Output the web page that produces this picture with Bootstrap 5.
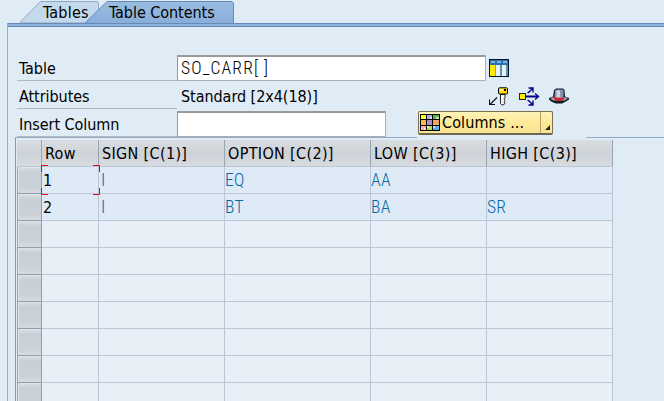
<!DOCTYPE html>
<html lang="en">
<head>
<meta charset="utf-8">
<title>Table Contents</title>
<link href="https://cdn.jsdelivr.net/npm/bootstrap@5.3.0/dist/css/bootstrap.min.css" rel="stylesheet">
<style>
body{width:664px;height:401px;background:#dfebf5;color:#000;font:16px/20px "DejaVu Sans Condensed","DejaVu Sans",sans-serif;font-stretch:condensed;letter-spacing:-.05px}
.tabstrip{height:23px}
.tab-item{height:23px}
.tab-a{width:65px;margin-left:20px;padding:3px 0 0 23px;letter-spacing:.2px}
.tab-b{width:149px;padding:3px 0 0 24px}
.tab-shape{position:absolute;left:0;top:0}
.tab-item span{position:relative}
.panel{margin-left:7px;height:378px;border-left:1px solid #97aeca}
.strip{height:4px;background:#8db2dc;border-top:1px solid #668bb6;border-bottom:1px solid #668bb6}
.form-area{padding:28px 0 0 9px}
.line{height:28px}
.line.first,.line.last{height:26px}
.line.mid{height:30px}
.lbl{width:160px;padding:4px 0 0 2px;border-bottom:1px solid #b3b6ba}
.first .lbl,.last .lbl{height:26px}
.mid .lbl{height:28px;padding-top:6px}
.field{height:26px;border:1px solid #aaadb2;border-top:2px solid #999;border-left-color:#999;background:#fff;border-radius:1px}
.w-table{width:309px;padding:1px 0 0 3px}
.w-insert{width:209px}
.attr{width:312px;padding:6px 0 0 4px;letter-spacing:-.05px}
.mono{font-family:Roboto,"Liberation Sans",sans-serif;font-weight:300;font-size:17.5px;letter-spacing:.3px}
.w-table.mono{letter-spacing:1.15px}
.colbtn{width:135px;height:24px;margin-left:32px;border:1px solid #7b6f50;border-bottom:2px solid #6f6650;border-radius:2px;background:linear-gradient(#fff3b8,#fde894 55%,#f9e395)}
.colbtn .main{width:122px;padding-left:1px;border-right:1px solid #b3a36a}
.colbtn span{padding:1px 0 0 2px;letter-spacing:.12px}
.gridbox{margin-left:7px;width:649px;height:264px;border-left:1px solid #7f9cc4;padding:2px 0 0 1px}
.topline{height:1px;background:#93acca}
.sheet{display:grid;grid-template-columns:25px 57px 126px 146px 116px 126px;grid-template-rows:27px;grid-auto-rows:27px;width:596px;height:262px}
.sheet>div{border-right:1px solid #bdc6d6;border-bottom:1px solid #bdc6d6;background:#e8eff6;white-space:nowrap;overflow:hidden}
.sheet>.hd{background:linear-gradient(#d9dddf,#ced3d9 55%,#d8dcdf);border-right-color:#9aa5b3;padding:4px 0 0 3px;letter-spacing:.34px}
.sheet>.sel{background:linear-gradient(#dcdfe4,#c9cfd7 20%,#ccd2d8 80%,#d8dce0);border-color:#909eb0;box-shadow:inset 1px 0 #9ba7b6,inset 2px 1px #dfe2e7}
.sheet>.f{background:#deeaf5;padding:4px 0 0 1px}
.sheet>.m{color:#0467a5;padding:3px 0 0}
.sheet>.bar{padding-left:2px}
.focus-box{left:41px;top:165px}
</style>
<script src="https://cdn.jsdelivr.net/npm/bootstrap@5.3.0/dist/js/bootstrap.bundle.min.js"></script>
</head>
<body class="overflow-hidden position-relative">
<nav class="tabstrip d-flex">
 <div class="tab-item tab-a position-relative flex-shrink-0">
  <svg class="tab-shape" width="79" height="23"><path d="M0 22.5L20.5 1.5H77.5L78.5 3V23H0Z" fill="#c4d9ec" stroke="#91a9c4"/></svg>
  <span>Tables</span>
 </div>
 <div class="tab-item tab-b position-relative flex-shrink-0">
  <svg class="tab-shape" width="149" height="23"><defs><linearGradient id="tg" x2="0" y2="1"><stop stop-color="#99bce1"/><stop offset="1" stop-color="#88add9"/></linearGradient></defs><path d="M0 23L22 1.5H147L148.500 3V24" fill="url(#tg)" stroke="#668bb6"/></svg>
  <span>Table Contents</span>
 </div>
</nav>
<main class="panel">
 <div class="strip"></div>
 <div class="form-area">
  <div class="line first d-flex">
   <div class="lbl">Table</div>
   <div class="field mono w-table">SO_CARR[ ]</div>
   <svg style="margin:4px 0 0 3px" width="20" height="18" shape-rendering="crispEdges"><path fill="#001530" d="M0 0h20v18H0z"/><path fill="#2c6faa" d="M1 1h18v5H1z"/><path fill="#78b7df" d="M2 2h4v2H2zM8 2h4v2H8zM14 2h4v2h-4z"/><path fill="#ffe900" d="M1 6h5v11H1z"/><path fill="#c9a500" d="M6 6h1v11H6z"/><path fill="#e3f3fb" d="M7 6h4v11H7zM13 6h4v11h-4z"/><path fill="#6b8b9f" d="M11 6h2v11h-2zM17 6h2v11h-2z"/></svg>
  </div>
  <div class="line mid d-flex">
   <div class="lbl">Attributes</div>
   <div class="attr">Standard [2x4(18)]</div>
   <svg style="margin-top:6px" width="20" height="19"><path d="M8 10.500L1 17.500M.5 12.500V17.500H6" fill="none" stroke="#111" stroke-width="1.100"/><path d="M11.500 7.500V16.500L13 18H14L16 16.500L15 15L16 13.500L15 12L16 10.500V7.500Z" fill="#f4f4f4" stroke="#111" stroke-width=".9"/><rect x="9.500" y=".8" width="9" height="6.200" rx="1" fill="#ffe000" stroke="#000"/><path d="M11 2h3v1.500h-3z" fill="#fff6b0"/><path d="M15 2h2v2h-2z" fill="#000"/></svg>
   <svg style="margin:6px 0 0 10px" width="21" height="19"><g fill="none" stroke="#000083" stroke-width="1.4"><path d="M7 9.500H19" stroke-width="2"/><path d="M16 6.500l3.500 3-3.500 3"/><path d="M8.500 5.500h1L13.500 1.500M8.500 13.500h1L13.500 17.500M9.500 1h4.500v4.500M9.500 18h4.500v-4.500"/></g><path fill="#222" d="M0 6h7v7H0z"/><path fill="#fff100" d="M1 7h5v5H1z"/></svg>
   <svg style="margin:7px 0 0 9px" width="20" height="16"><path d="M0 10L4 8.500L5 2L7 .5H14L15.500 2L16 8.500L20 10V11.500L16 14L13 15.500H7L3 14L0 11.500Z" fill="#161820"/><path d="M1 10L5 9H15L19 10L16 12.500H4Z" fill="#9a9bb0"/><path d="M6 2L8 1.500H13L14.500 2V9H5.500Z" fill="#7f94ad"/><path d="M7.500 2.500h3.500v6.500h-3.500z" fill="#c8d8e6"/><path d="M5 8.500L8 10H12L15 8.500V11L12 12.500H8L5 11Z" fill="#e61924"/></svg>
  </div>
  <div class="line last d-flex">
   <div class="lbl">Insert Column</div>
   <div class="field w-insert"></div>
   <div class="colbtn d-flex">
    <div class="main d-flex">
     <svg style="margin-top:2px" width="20" height="17" shape-rendering="crispEdges"><path d="M0 0h20v17H0z"/><path fill="#ff0" d="M1 1h5v4H1z"/><path fill="#b4a7e4" d="M7 1h5v4H7z"/><path fill="#60b450" d="M13 1h6v4h-6z"/><path fill="#ffb45b" d="M1 6h5v5H1z"/><path fill="#aa8bc8" d="M7 6h5v5H7z"/><path fill="#f4a461" d="M13 6h6v5h-6z"/><path fill="#ffb0a8" d="M1 12h5v4H1z"/><path fill="#b5dc5c" d="M7 12h5v4H7z"/><path fill="#64a9ed" d="M13 12h6v4h-6z"/><path fill="#fff" d="M4 3h2v2H4zM10 3h2v2h-2zM16 3h3v2h-3zM4 14h2v2H4zM7 12h2v2H7zM13 12h2v2h-2z" opacity=".65"/></svg>
     <span>Columns ...</span>
    </div>
    <svg width="11" height="21"><path d="M9 13V18H4Z" fill="#222"/></svg>
   </div>
  </div>
 </div>
 <div class="d-flex" style="margin-left:7px"><div class="topline" style="width:402px"></div><div class="topline" style="width:78px;margin-left:169px"></div></div>
 <section class="gridbox">
  <div class="sheet">
   <div class="hd"></div><div class="hd">Row</div><div class="hd">SIGN [C(1)]</div><div class="hd">OPTION [C(2)]</div><div class="hd">LOW [C(3)]</div><div class="hd">HIGH [C(3)]</div>
   <div class="sel"></div><div class="f">1</div><div class="f m mono bar">I</div><div class="f m mono">EQ</div><div class="f m mono">AA</div><div class="f m"></div>
   <div class="sel"></div><div class="f">2</div><div class="f m mono bar">I</div><div class="f m mono">BT</div><div class="f m mono">BA</div><div class="f m mono">SR</div>
   <div class="sel"></div><div></div><div></div><div></div><div></div><div></div>
   <div class="sel"></div><div></div><div></div><div></div><div></div><div></div>
   <div class="sel"></div><div></div><div></div><div></div><div></div><div></div>
   <div class="sel"></div><div></div><div></div><div></div><div></div><div></div>
   <div class="sel"></div><div></div><div></div><div></div><div></div><div></div>
   <div class="sel"></div><div></div><div></div><div></div><div></div><div></div>
   <div class="sel"></div><div></div><div></div><div></div><div></div><div></div>
  </div>
 </section>
</main>
<svg class="focus-box position-absolute" width="59" height="30" fill="none" stroke="#e30613"><path d="M.5 7V.5H7M52 .5h6.500V7M58.500 23v6.500H52M7 29.500H.5V23"/></svg>
</body>
</html>
